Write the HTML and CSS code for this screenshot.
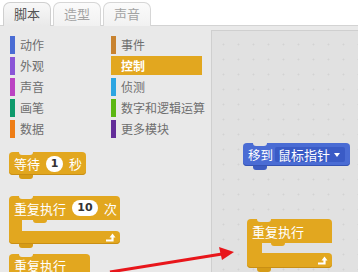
FILE: index.html
```html
<!DOCTYPE html>
<html>
<head>
<meta charset="utf-8">
<link rel="stylesheet" href="styles.css">
</head>
<body>
<div class="app">
  <div class="tabs">
    <div class="tab active">脚本</div>
    <div class="tab">造型</div>
    <div class="tab">声音</div>
  </div>
  <div class="main">
    <div class="palette">
      <div class="cats">
        <div class="cat"><span class="bar c-motion"></span>动作</div>
        <div class="cat"><span class="bar c-looks"></span>外观</div>
        <div class="cat"><span class="bar c-sound"></span>声音</div>
        <div class="cat"><span class="bar c-pen"></span>画笔</div>
        <div class="cat"><span class="bar c-data"></span>数据</div>
        <div class="cat"><span class="bar c-events"></span>事件</div>
        <div class="cat selected"><span class="bar c-control"></span>控制</div>
        <div class="cat"><span class="bar c-sensing"></span>侦测</div>
        <div class="cat"><span class="bar c-operators"></span>数字和逻辑运算</div>
        <div class="cat"><span class="bar c-more"></span>更多模块</div>
      </div>
      <div class="sep"></div>
      <div class="blocks">
        <div class="block stack wait"><span>等待</span><span class="num">1</span><span>秒</span></div>
        <div class="cblock repeat-n">
          <div class="c-top"><span>重复执行</span><span class="num wide">10</span><span>次</span></div>
          <div class="c-mid"><div class="c-arm"></div></div>
          <div class="c-bottom"><svg class="loop" width="11" height="9" viewBox="0 0 11 9"><path d="M1 7.5 H7.5 V4" fill="none" stroke="#fff" stroke-width="2.2"/><polygon points="4.5,4.5 7.5,0.5 10.5,4.5" fill="#fff"/></svg></div>
        </div>
        <div class="block stack forever-p"><span>重复执行</span></div>
      </div>
    </div>
    <div class="scripts">
      <div class="block motion goto"><span>移到</span><span class="dropdown">鼠标指针<i class="tri"></i></span></div>
      <div class="cblock forever-s">
        <div class="c-top"><span>重复执行</span></div>
        <div class="c-mid"><div class="c-arm"></div></div>
        <div class="c-bottom"><svg class="loop" width="11" height="9" viewBox="0 0 11 9"><path d="M1 7.5 H7.5 V4" fill="none" stroke="#fff" stroke-width="2.2"/><polygon points="4.5,4.5 7.5,0.5 10.5,4.5" fill="#fff"/></svg></div>
      </div>
    </div>
  </div>
  <svg class="arrow" width="358" height="272" viewBox="0 0 358 272">
    <line x1="110" y1="272" x2="222" y2="254" stroke="#e8161b" stroke-width="3"/>
    <polygon points="234,252 219,247 222,260" fill="#e8161b"/>
  </svg>
</div>
</body>
</html>
```
FILE: styles.css
```css
* { box-sizing: border-box; }
html, body { margin: 0; padding: 0; }
body {
  width: 358px;
  height: 272px;
  overflow: hidden;
  background: #fff;
  font-family: "Noto Sans CJK SC", "Noto Sans", sans-serif;
}
.app {
  position: relative;
  width: 358px;
  height: 272px;
  display: flex;
  flex-direction: column;
}
.tabs {
  height: 26px;
  display: flex;
  align-items: flex-end;
  gap: 2px;
  padding-left: 3px;
  border-bottom: 1px solid #d3d3d3;
  background: #fff;
}
.tab {
  width: 48px;
  height: 24px;
  margin-bottom: -1px;
  border: 1px solid #d6d6d6;
  border-bottom: none;
  border-radius: 7px 7px 0 0;
  background: linear-gradient(#fbfbfb, #f1f1f1);
  color: #a3a3a3;
  font-size: 13px;
  line-height: 22px;
  text-align: center;
}
.tab.active {
  background: linear-gradient(#f8f8f8, #e9e9e9);
  color: #555;
  border-color: #cfcfcf;
}
.main {
  flex: 1;
  display: flex;
  background: #e9e9e9;
  min-height: 0;
}
.palette {
  width: 211px;
  flex: none;
  display: flex;
  flex-direction: column;
}
.cats {
  padding: 9px 0 0 10px;
  display: grid;
  grid-template-columns: 101px 91px;
  grid-template-rows: repeat(5, 19px);
  grid-auto-flow: column;
  row-gap: 2px;
}
.cat {
  display: flex;
  align-items: center;
  font-size: 12px;
  color: #6e6e6e;
  height: 19px;
  white-space: nowrap;
}
.bar {
  width: 5px;
  height: 18px;
  margin-right: 5px;
  flex: none;
}
.cat.selected {
  background: #e2a71f;
  color: #fff;
  font-weight: bold;
}
.cat.selected .bar { height: 19px; }
.c-motion { background: #4a6cd4; }
.c-looks { background: #8a55d7; }
.c-sound { background: #bb42c3; }
.c-pen { background: #0e9a6c; }
.c-data { background: #ee7d16; }
.c-events { background: #c88330; }
.c-control { background: #e2a71f; }
.c-sensing { background: #2ca5e2; }
.c-operators { background: #5cb712; }
.c-more { background: #632d99; }
.sep {
  margin: 7px 10px 0 10px;
  height: 1px;
  background: #c9c9c9;
  box-shadow: 0 1px 0 #f6f6f6;
}
.blocks {
  padding: 7px 0 0 9px;
  display: flex;
  flex-direction: column;
  align-items: flex-start;
}
.block {
  position: relative;
  height: 23px;
  border-radius: 4px;
  background: #e2a71f;
  box-shadow: inset 0 -1px 0 #c98f14;
  color: #fff;
  font-size: 13px;
  display: flex;
  align-items: center;
  gap: 4px;
  padding: 0 6px 0 5px;
  white-space: nowrap;
}
.block::before, .c-top::before {
  content: "";
  position: absolute;
  top: 0;
  left: 10px;
  width: 14px;
  height: 3px;
  border-radius: 0 0 3px 3px;
  background: #e9e9e9;
}
.block::after, .c-bottom::after {
  content: "";
  position: absolute;
  bottom: -4px;
  left: 10px;
  width: 14px;
  height: 4px;
  border-radius: 0 0 3px 3px;
  background: #d69c17;
}
.scripts .block::before, .scripts .c-top::before { background: #e1e1e1; }
.num {
  background: #fff;
  color: #333;
  font-weight: bold;
  font-family: "DejaVu Sans", sans-serif;
  font-size: 11px;
  height: 16px;
  min-width: 17px;
  border-radius: 8px;
  line-height: 16px;
  text-align: center;
  padding: 0 4px;
}
.num.wide { min-width: 26px; }
.wait { width: 77px; }
.wait .num { margin: 0 2px; }
.cblock {
  position: relative;
  display: flex;
  flex-direction: column;
  color: #fff;
  font-size: 13px;
}
.c-top {
  position: relative;
  height: 24px;
  background: #e2a71f;
  border-radius: 4px 4px 0 0;
  display: flex;
  align-items: center;
  gap: 4px;
  padding: 0 6px 0 5px;
  white-space: nowrap;
}
.c-top::after {
  content: "";
  position: absolute;
  bottom: -3px;
  left: 24px;
  width: 14px;
  height: 3px;
  border-radius: 0 0 3px 3px;
  background: #e2a71f;
}
.c-mid {
  height: 11px;
  display: flex;
}
.c-arm {
  width: 13px;
  background: #e2a71f;
}
.c-bottom {
  position: relative;
  height: 13px;
  background: #e2a71f;
  border-radius: 0 4px 4px 4px;
  box-shadow: inset 0 -1px 0 #c98f14;
  display: flex;
  justify-content: flex-end;
  align-items: center;
  padding-right: 4px;
}
.loop { display: block; }
.repeat-n { width: 111px; margin-top: 21px; }
.repeat-n .num { margin: 0 2px; }
.forever-p { width: 81px; margin-top: 10px; }
.scripts {
  flex: 1;
  position: relative;
  margin-top: 4px;
  border-left: 1px solid #cfcfcf;
  border-top: 1px solid #cfcfcf;
  background-color: #e1e1e1;
  background-image: radial-gradient(circle, #d3d3d3 0.8px, transparent 1.2px);
  background-size: 15px 15px;
  background-position: 4px 6px;
}
.block.motion {
  background: #4a6cd4;
  box-shadow: inset 0 -1px 0 #3553b3;
}
.block.motion::after { background: #3d5cc0; }
.goto {
  position: absolute;
  left: 31px;
  top: 112px;
  width: 107px;
  gap: 2px;
  padding: 0 5px 0 5px;
}
.goto > span:first-child { font-size: 12.5px; }
.dropdown {
  flex: none;
  height: 15px;
  width: 70px;
  background: #3a5bc6;
  border-radius: 2px;
  display: flex;
  align-items: center;
  padding-left: 3px;
  font-size: 13px;
  position: relative;
}
.tri {
  position: absolute;
  right: 5px;
  top: 6px;
  width: 0;
  height: 0;
  border-left: 3px solid transparent;
  border-right: 3px solid transparent;
  border-top: 4px solid #fff;
}
.forever-s {
  position: absolute;
  left: 35px;
  top: 188px;
  width: 85px;
}
.forever-s .c-mid { height: 10px; }
.forever-s .c-arm { width: 15px; }
.forever-s .c-bottom { height: 15px; }
.arrow {
  position: absolute;
  left: 0;
  top: 0;
  pointer-events: none;
}
```
